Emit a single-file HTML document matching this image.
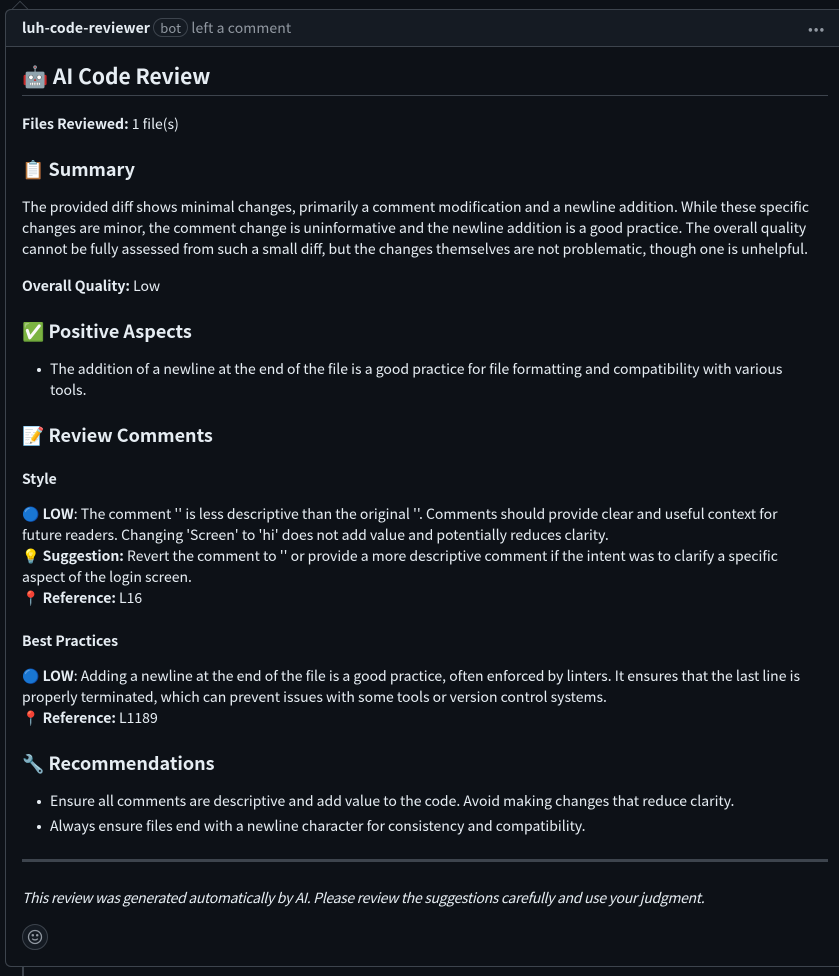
<!DOCTYPE html>
<html><head><meta charset="utf-8"><style>
*{margin:0;padding:0;box-sizing:border-box}
body{width:839px;height:975px;background:#0d1117;color:#e6edf3;font-family:"Noto Sans CJK JP","Liberation Sans",sans-serif;font-size:14px;overflow:hidden;position:relative}
.a{position:absolute;left:22px;white-space:nowrap;line-height:21px}
.box{position:absolute;left:5px;top:9px;width:850px;height:958px;border:1px solid #3d444d;border-right:none;border-radius:6px 0 0 6px}
.hdr{position:absolute;left:5px;top:9px;width:850px;height:38px;background:#151b23;border:1px solid #3d444d;border-right:none;border-radius:6px 0 0 0}
h1{font-size:21px;font-weight:700;line-height:30px}
h2{font-size:18px;font-weight:700;line-height:27px}
b{font-weight:700}
.li{position:absolute;left:50px;line-height:21px;width:760px}
.li:before{content:"";position:absolute;left:-13px;top:9px;width:4px;height:4px;border-radius:50%;background:#e6edf3}
</style></head><body>
<div style="position:absolute;left:22px;top:966px;width:2px;height:10px;background:#3d444d"></div>
<div class="box"></div>
<div class="hdr"></div>
<div style="position:absolute;left:14px;top:3px;width:12px;height:12px;border-left:1px solid #3d444d;border-top:1px solid #3d444d;transform:rotate(45deg);background:#0d1117;clip-path:polygon(0 0,100% 0,0 100%)"></div>
<div class="a" style="top:18px;letter-spacing:0.1px"><b style="color:#e6edf3">luh-code-reviewer</b> <span style="display:inline-block;border:1px solid #3d444d;border-radius:10px;padding:0 6px;line-height:17px;font-size:13px;color:#9198a1">bot</span> <span style="color:#9198a1">left a comment</span></div>
<div style="position:absolute;left:808px;top:27px;color:#9198a1;letter-spacing:1px;font-size:14px;line-height:4px">•••</div>
<div class="a" style="top:61px"><h1>🤖 AI Code Review</h1></div>
<div style="position:absolute;left:22px;top:95px;width:806px;height:1px;background:#3d444d"></div>
<div class="a" style="top:114px"><b>Files Reviewed:</b> 1 file(s)</div>
<div class="a" style="top:156px"><h2>📋 Summary</h2></div>
<div class="a" style="top:197px">The provided diff shows minimal changes, primarily a comment modification and a newline addition. While these specific<br>changes are minor, the comment change is uninformative and the newline addition is a good practice. The overall quality<br>cannot be fully assessed from such a small diff, but the changes themselves are not problematic, though one is unhelpful.</div>
<div class="a" style="top:276px"><b>Overall Quality:</b> Low</div>
<div class="a" style="top:318px"><h2>✅ Positive Aspects</h2></div>
<div class="li" style="top:359px">The addition of a newline at the end of the file is a good practice for file formatting and compatibility with various<br>tools.</div>
<div class="a" style="top:422px"><h2>📝 Review Comments</h2></div>
<div class="a" style="top:469px"><b>Style</b></div>
<div class="a" style="top:504px">🔵 <b>LOW</b>: The comment '' is less descriptive than the original ''. Comments should provide clear and useful context for<br>future readers. Changing 'Screen' to 'hi' does not add value and potentially reduces clarity.<br>💡 <b>Suggestion:</b> Revert the comment to '' or provide a more descriptive comment if the intent was to clarify a specific<br>aspect of the login screen.<br>📍 <b>Reference:</b> L16</div>
<div class="a" style="top:631px"><b>Best Practices</b></div>
<div class="a" style="top:666px">🔵 <b>LOW</b>: Adding a newline at the end of the file is a good practice, often enforced by linters. It ensures that the last line is<br>properly terminated, which can prevent issues with some tools or version control systems.<br>📍 <b>Reference:</b> L1189</div>
<div class="a" style="top:750px"><h2>🔧 Recommendations</h2></div>
<div class="li" style="top:791px">Ensure all comments are descriptive and add value to the code. Avoid making changes that reduce clarity.</div>
<div class="li" style="top:816px">Always ensure files end with a newline character for consistency and compatibility.</div>
<div style="position:absolute;left:22px;top:859px;width:806px;height:3px;background:#3d444d"></div>
<div class="a" style="top:888px;font-style:italic;letter-spacing:-0.32px">This review was generated automatically by AI. Please review the suggestions carefully and use your judgment.</div>
<div style="position:absolute;left:22px;top:924px;width:26px;height:26px;border-radius:50%;border:1px solid #3d444d;background:#151b23">
<svg width="16" height="16" viewBox="0 0 16 16" style="position:absolute;left:4px;top:4px" fill="none" stroke="#9198a1" stroke-width="1.3"><circle cx="8" cy="8" r="6.5"/><path d="M5.2 9.6c.7.9 1.6 1.3 2.8 1.3s2.1-.4 2.8-1.3"/><circle cx="5.8" cy="6.3" r=".6" fill="#9198a1"/><circle cx="10.2" cy="6.3" r=".6" fill="#9198a1"/></svg></div>
</body></html>
